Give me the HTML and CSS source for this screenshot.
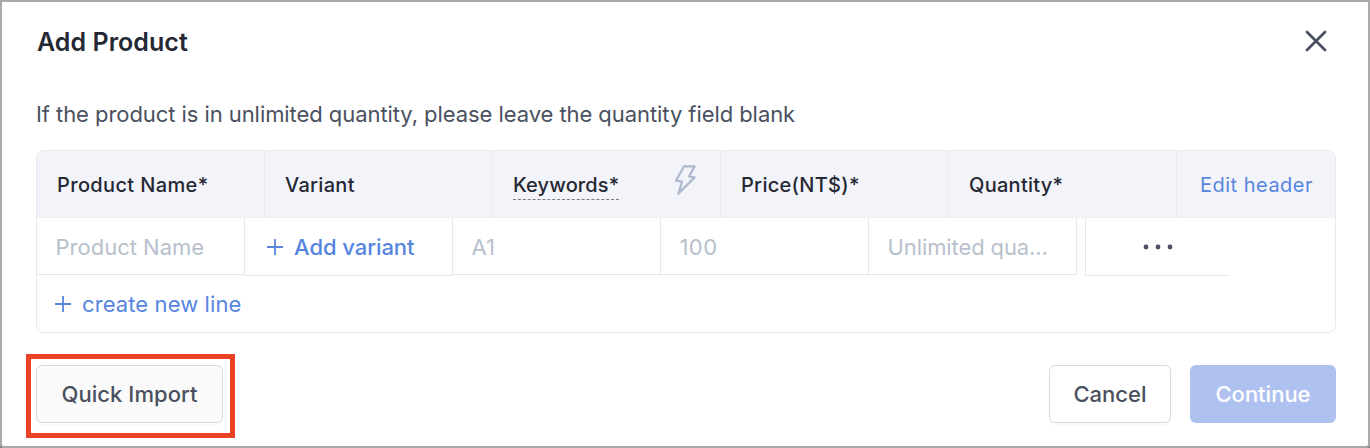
FILE: index.html
```html
<!DOCTYPE html>
<html lang="en">
<head>
<meta charset="utf-8">
<title>Add Product</title>
<link rel="stylesheet" href="styles.css">
</head>
<body>
<main class="dialog">
  <header class="dialog-head">
    <h1 class="title">Add Product</h1>
    <button class="close" aria-label="Close">
      <svg width="24" height="24" viewBox="0 0 24 24"><path d="M3 3L21 21M21 3L3 21"/></svg>
    </button>
  </header>
  <p class="hint">If the product is in unlimited quantity, please leave the quantity field blank</p>
  <section class="table">
    <div class="table-head">
      <div class="th"><span class="t-name">Product Name*</span></div>
      <div class="th"><span class="t-variant">Variant</span></div>
      <div class="th"><span class="keywords">Keywords*</span>
        <svg class="bolt" width="24" height="32" viewBox="0 0 24 32"><path d="M11 2.4H21.6L16 12.4L21.6 13.4L5.4 29.6L9 17.6L3 16.6Z"/></svg>
      </div>
      <div class="th"><span class="t-price">Price(NT$)*</span></div>
      <div class="th"><span class="t-qty">Quantity*</span></div>
      <div class="th edit"><span class="t-edit">Edit header</span></div>
    </div>
    <div class="table-row">
      <div class="input"><span class="p-name">Product Name</span></div>
      <div class="variant">
        <svg class="plus" width="18" height="18" viewBox="0 0 18 18"><path d="M9 1V17M1 9H17"/></svg>
        <span class="t-add">Add variant</span>
      </div>
      <div class="input"><span class="p-key">A1</span></div>
      <div class="input"><span class="p-price">100</span></div>
      <div class="input"><span class="p-qty">Unlimited qua...</span></div>
      <div class="more"><svg width="32" height="8" viewBox="0 0 32 8"><circle cx="4" cy="4" r="2.4"/><circle cx="16" cy="4" r="2.4"/><circle cx="28" cy="4" r="2.4"/></svg></div>
    </div>
    <div class="new-line">
      <svg class="plus" width="18" height="18" viewBox="0 0 18 18"><path d="M9 1V17M1 9H17"/></svg>
      <span class="t-new">create new line</span>
    </div>
  </section>
  <footer class="actions">
    <div class="highlight"><button class="btn import"><span class="t-import">Quick Import</span></button></div>
    <div class="right">
      <button class="btn cancel"><span class="t-cancel">Cancel</span></button>
      <button class="btn continue"><span class="t-continue">Continue</span></button>
    </div>
  </footer>
</main>
</body>
</html>
```
FILE: styles.css
```css
* { box-sizing: border-box; }
body { margin: 0; background: #777; font-family: Inter, "Liberation Sans", sans-serif; color: #4a5060; }
button { font: inherit; color: inherit; padding: 0; border: 0; background: none; }
svg { display: block; flex: none; fill: none; }
span { white-space: nowrap; }
.dialog { width: 1370px; height: 448px; background: #fff; border: 2px solid #aaa; border-radius: 0 0 4px 4px; overflow: hidden; }
.dialog-head { display: flex; align-items: center; justify-content: space-between; height: 80px; padding: 0 40px 0 35px; }
.title { margin: 0; padding-bottom: 1px; font-size: 25px; font-weight: 600; line-height: 30px; color: #252833; letter-spacing: 0.04px; }
.close { margin-top: -2px; }
.close path { stroke: #4a5060; stroke-width: 2.8; stroke-linecap: round; }
.hint { margin: 0; padding: 17px 34px 0 34px; height: 68px; font-size: 22px; line-height: 30px; letter-spacing: -0.065px; white-space: nowrap; }
.table { width: 1300px; height: 183px; margin-left: 34px; border: 1px solid #e7e9ef; border-radius: 8px; overflow: hidden; }
.table-head { display: grid; grid-template-columns: repeat(5, 228px) 1fr; height: 67px; background: #f3f4f9; border-bottom: 1px solid #eceef2; color: #252833; font-size: 20px; font-weight: 500; }
.th { display: flex; align-items: center; justify-content: space-between; padding: 1px 23px 0 20px; border-right: 1px solid #e7e9ee; }
.t-name { letter-spacing: 0.36px; }
.t-variant { letter-spacing: 0.3px; }
.t-price, .t-qty { letter-spacing: 0.28px; }
.edit { justify-content: center; border-right: 0; padding: 1px 0 0 1px; color: #5685e0; font-weight: 400; }
.t-edit { letter-spacing: 0.5px; }
.keywords { line-height: 26px; border-bottom: 1px dashed #777b8a; margin-top: 3px; padding-bottom: 1px; letter-spacing: 0.14px; }
.bolt { margin-top: -9px; }
.bolt path { stroke: #adb9cf; stroke-width: 2.2; stroke-linejoin: round; }
.table-row { display: grid; grid-template-columns: repeat(5, 208px) 144px; height: 58px; font-size: 22px; }
.input { height: 57px; display: flex; align-items: center; padding: 2px 0 0 18.5px; border-right: 1px solid #e7e9ee; border-bottom: 1px solid #e4e6ed; color: #b8bfcc; }
.p-price { letter-spacing: 0.4px; }
.p-qty { letter-spacing: -0.1px; }
.variant { display: flex; align-items: center; gap: 10px; padding: 0 0 0 21px; border-right: 1px solid #e7e9ee; border-bottom: 1px solid #e4e6ed; color: #5685e0; font-weight: 500; }
.t-add { letter-spacing: -0.05px; }
.plus path { stroke: #5685e0; stroke-width: 1.8; }
.more { margin-left: 8px; width: 144px; display: flex; justify-content: center; align-items: center; border-left: 1px solid #e4e6ed; border-bottom: 1px solid #e4e6ed; }
.more circle { fill: #4a5060; }
.new-line { display: flex; align-items: center; gap: 10px; height: 55px; padding-left: 17px; font-size: 22px; color: #5685e0; }
.t-new { letter-spacing: 0.1px; }
.actions { display: flex; justify-content: space-between; padding: 21px 32px 0 24px; }
.highlight { width: 209px; height: 84px; padding: 6px 5px; border: 5px solid #ec4025; }
.btn { height: 58px; border: 1px solid #d3dce6; border-radius: 6px; font-size: 22px; font-weight: 500; box-shadow: 0 3px 1px #fafafa; }
.import { display: block; width: 187px; background: #fafafa; }
.t-import { letter-spacing: 0.07px; }
.right { display: flex; gap: 19px; padding-top: 11px; }
.cancel { width: 122px; background: #fff; }
.continue { width: 146px; border: 0; background: #afc1ef; color: #fff; box-shadow: none; }
```
